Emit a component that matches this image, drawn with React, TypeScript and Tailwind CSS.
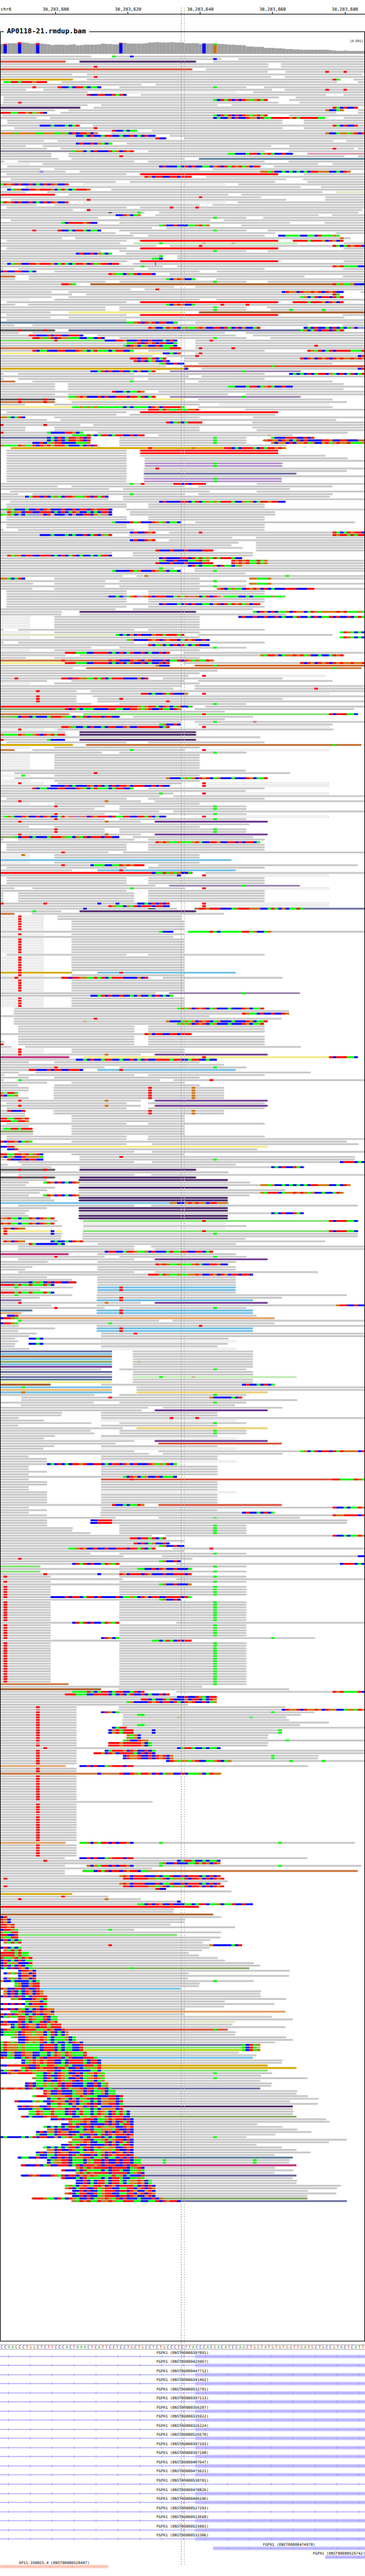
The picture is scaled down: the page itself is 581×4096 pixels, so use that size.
import React from "react";

const CELL = 1000 / 101;
const ROW = 7;
const FIRST_ROW = 154;
const READ_HEIGHT = 5;

const BAR_COLORS: Record<string, string> = {
  "": "#c8c8c8",
  t: "#d8503a",
  p: "#4b2768",
  y: "#d4a900",
  o: "#ffffff",
  n: "#d17105",
  m: "#958ea0",
  k: "#dba0b2",
  s: "#5a7f99",
  r: "#ff0000",
  l: "#dbe5c0",
  e: "#b9ffa5",
  b: "#c7743c",
  w: "#a65c27",
  h: "#f2ea87",
  z: "#565454",
  v: "#66699b",
  q: "#80df70",
  u: "#8962a8",
  j: "#ad7bd4",
  x: "#cf6020",
  a: "#86a862",
  i: "#703a93",
  c: "#6fbee5",
  f: "#bc2b76",
  d: "#8f79b5",
  g: "#dfa064",
  E: "#ebb96b",
  F: "#ebd070",
  H: "#a8d600",
};

const OUTLINED = "oeuj";

const BASE_COLORS: Record<string, string> = {
  A: "#00ff00",
  C: "#0000ff",
  G: "#d17105",
  T: "#ff0000",
  a: "#66e066",
  c: "#8c8cdc",
  g: "#cbb69c",
  t: "#dd7878",
};

// One line per alignment row. "a-b" is a read over cells a..b, with a colour
// key before it and "<" or ">" for its direction; "nACGT" are mismatched bases
// from cell n on; "D" marks a deletion, "I" an insertion; "n*" repeats the row.
const READS = `0-25> 31-101 31A 36C
0-61> 59C 66-101
t0-18> p22-54> 59-101
0-74> <78-101
0-74> <78-101 26T
t0-53> 57-101
0-74 79-101 90T 95T
0-20 24-100>
0-75 <79-101 26T
y0-20> 24-94> 92TA <98-101
1AATTATTTGTTT 17-93> 99-101
0-39> 43-101
0-28> 9T 16TCCACTTACAAC 33-68> 59A 73-101
0-7> 12-75> <79-101 90T 95T
0-24> o28-65> 70-101
0-35 24TCCTTCCTATC 39-90> 95-101
1-77> <82-101
1-74> 59ACTATCTCTGAGTAT 80-101
<1-77 5T <83-101
0-24> 28-60> 64-101
p0-22> 26-99> 92TACTCCT
0-15> 19-95> 90GCCAG 99-101
0TTTAATTGTAGTC <17-93 99-101
<1-74 59ACTATCTCTGAGTAT 80-101
0-10> <14-90 59CACCGCTCCTGGCTAATTTTTGTATTTTTAA 95-101
2*2-78> 84-101
0-22> 11CCCACCCACAT <26-101 92TACTCCT
4-78> 84-101 26T
0-38 31TCCACAA 42-101
n0-27> 4A 10AA 15AA 18A 19CTCTTGCt <31-101 90GCCAGGAGTCT
0-43> 21CCACTCCATTCCACCTCACTCC 47-101
0-46> 43TCC 51-101
0-12> 16-92> <96-101
0-31> 21CTCCTCGACA 35-101
0-7> <12-75 80-101
0-13 <17-98 99-101 92T
m0-37> 20AGGCaCTCCCTAGCTGT 41-73> <80-101
0-14> 19-81> 63AACCCATTCAGTACCTCC k85-101
0-14> 19-95> 33T 99-101
0-16> <20-51 s55-101
0-1> 5-37> 41-73> <80-101
o0-8> <12-88 92-101
2-72> 44CTCCCACTCTCCAACGTCTATGTAGCTT <76-101
0-11> 15-55> <59-101
0-18> 11c 22-97> 72GGAGCCACACACACTTGGGCCACTG
<2-35 <r39-77 84-101
0-53> 40TGCTTCCTTCTTT 57-101
3-79> <84-101
0-32 36-76> 85-101
0-19> 0ATGTCTCCTCACTCTGCCT o23-62> 66-101
0-3> 7-83> <89-101
2-25> 2CAGGCCTTGTTTGCATACATTTG <31-101
0-7> 13-89> l93-101
r0-15> 19-63> <67-101
0-72> 55T 90-101
3-79> 24T 90-101
0-19 0ATGTCTCCTCACTCTGCCT o23-62> <66-101
0-10> 15-55> <59-101
<2-35 <39-101 47T 54T
0-20> 24-100> 24T
0-40 38A D30-31 44-99>
0-39 32CCTGCAG 43-88> <92-101
0-27> 33-68> 59A <73-101
3-58> 62-101
0-27 17ACTTTTGTCC 33-80> <90-101
0-58> 44AGCCTCCCAAGTAG <67-101
0-42 46-101
0-28 9T 16TCCACTTACAAC 33-68> 59A 74-101
0-32 36-76> <93-101
0-37 41-73> 77CCAAAACCAACTAAAGA
0-17> <21-97 94G
<2-35 <r39-77 81-95 81TTTTATTTGCTGCT
0-33> e37-82> 44A 56g 64g 95-101
0-43> 47-101 55T 92TACATGTTC
<2-35 <r39-77 95-101
0-28 33-68> 59A 74-101
0-31 21CTCCTCGACA <35-101
0-45> 44A 49-101
0-45> 42AAC 49-101
0-35> <r39-77 95-101
0-33 2CAGGCCTTGTTTGCATACATTGCTAGTTCTT <37-101 I43
0-45 39A 49-101 92TGTAAAACC
0-1 5-37> 41-73> <95-101
0-10> 0CTCCTTCCAC 15-55> 60-101
0-43> 30TGAACGATCTTTC 47-101
b0-4> 8-84> <95-101
0-4> 8-54> 46ACGTGCCA <60-101
0-29> 33-68> 59A 74-101
0-21> 17TTGA w25-101 92TAGAAGCCC
0-48> 54-101
0-36> 40-101 43T
0-14> 19-95> 78CTGGCTGGTGTCTGTCC <100-101
0-20 <24-94 92TA
0-14> 19-95> 83AGCATCTTCTAT
o0-8> 15-55> <60-101
<2-35 <r39-77 <81-95 81TTTTATTTGCTGCT
0-4> <8-101 46ACGTGCCA 61T 68T
0-29> 33-68> 59A <74-101
0-29> 33-68> 59A <75-101 80A 89A
0-14 h19-51> w55-101
<2-35 <r39-77 <95-101
0-14 19-95>
<2-35 <39-101
s0-49> 35AAGTCTGTCTTCCA 54-101
0-4 9-85> <95-101
0-72 41TGCCATGTCAGAAGTGCCTTCTACTCGCCAT <84-101 84CACTCCACTCACAtCcc
z0-15> 5T 12T v19-95> 83AGCATCTTCTAT
0-5> 9-62> 68-101
0-23> 8TTCCCTCTTCCTTTC 27-65> 70-101
0-29 9TTGAGTCTGGAAACCAACTC 33-68> 59A <75-101
q0-49> 15T 29CCCTTGCCCTCCTCCCACTC 54-101 58T
0-49> 35AAGTCTGTCTTCCA 54-101
0-49> 34ACTGCAGCCTCAAAC 54-101 87T
b0-50> 45AATTT 54-101 55T 64T
0-37> 9TCAACCCTTCCCTGACATAAACATTCCA 41-73> 85-101 85TGATCATCTTTTAAAT
h0-50> 45CCACT 54-101 55T
0-42> 46-101 54T 99CT
0-46> 36TTCTTATCAT 51-101 83TCTGCTGTCTGTGGTGTG
0-47> 37TCTCAGCCTC <51-101
0-51> 44AGCCTCC <55-92
0-46 <t51-101 75A
y0-52> 51C <56-101 99CT
0-43> 25CCATCTCCTCCACGCCAT u47-83> 67A
0-1 5-37> 41-73> 80CACACTCATTCGACTCATCAT
0-52> <56-101
0-1 5-37> 41-73>
b0-4> 9-51> 36A <55-92
0-15> <19-95
0-15> <19-101 63AACCCATTCAGTACCTCC
0-15> <19-95
0-40> 31TCCACAATG <44-101
0-15> <19-63 68-101
0-43> 19AAGTGCCCTCTCCTTTCTTATCAT u47-83> 67A
z0-15> 5T 12T <h19-51 <55-92
b0-15> 5T 12T <20-96
0-7 15-55> <o61-91
h0-51> 20AAGAGAGAAAAAAACACAAAACTGCTTTTTA <55-92
0-55> 41TTTATGAAGAAGGT <68-101
<2-35 <r39-77
0-32> 36-76>
0-7> 0GGACATC 15-55> 70-101
0-13 <17-93
0-56 46TCAGCATTTT <70-101
0-22> 0T 12T <26-101
0-7> 15-55> <70-101
0-7 15-55> 71-101
0-23 0T 13ACCCCTTGCA 27-96>
0-40> 20AAAATACATTCATTCCTCTT <44-81 74g
v0-25> 13CACTCATTGTCT 33-68> 59A <75-87 75ACCCTTTCCTCT
0-25> 13CACTCATTGTCT 33-68> 59A <w73-101 73GTGGCTGCATCTCCCCTTGCCTTCCC
0-25 9CCTCAGTTCCCCAAAG 33-68> 59A <75-101 75GCGGCTCGGTAGCCGTAGTGGTAAAG
0-27 0GAAAATGAATCTGTATTTACCCACTCT 33-79>
y3-79> 41T 53G 62TTCACTTTACTATTGTG
2*<2-35 <r39-77
<2-35 <39-90
<2-35 40-96>
<2-35 40-101
2*<2-35 j40-78> 59A
<2-35 <40-101 43T
<2-35 <40-96
<2-35 <v40-82
<2-35 <40-101
2*<2-35 <j40-78 59A
0-57 36A 39T 48TTCTCTTTT 71-101
0-16 <20-51 <55-92
0-30> 34-80>
<3-58 71-101
0-5 9-51> 36A <55-92
0-30 7CATTCTCAGACTTGAAGTCTATC 34-91>
0-30 34-101
<3-79 44CTCCCCTTCATCAGAGATTTACCGAGCATTGTTCC
2*<2-35 41-73>
m0-31> 1AGACCCACCTCTGCCCTCCTCTTCTGTTTC <35-101
0-31 2TAGGCTTCCTTTCACTCATGCCACACTTC 36-76>
0-31> 0AaGACcCaccctCTgCCCcCtCCTTCGattC 36-76>
2*<2-35 41-73>
0-50> 31ACCCCTAGCCCTGAGCAAC 54-98>
2*<2-35 41-73>
0-1 5-37> 41-73>
0-43> 36CTCCTGT <47-101 55T 92TACATGTTC
0-31 11CCCACCCACACCTCATCGAT <36-101 92TGTTATATT
0-64> <71-101
0-43 36CTCCTGT <47-101
0-66 <71-101
0-64 <71-101
0-67> <71-101
0-59> 43TCCCTCCCTCCCCTTT <71-101
0-31 <37-70
0-31 2TAGGCTTCCTTTCACTCATCACCACATTC <37-70
0-67> 44CTCCCCTTCTATAGATATTTACC
0-58 44AGCCTCCCAAGTAG 64-101 64TGTGTAATAG
0-59 43TCCCTCCCTCCCCTTT <64-101 64TGTGTAATAG
0-101 52CTACAAAGCTAACAG
0-48> 44A <54-101
0-50 31ACCCCTAGCCCTGAGCAAC <54-101 59A
0-68
0-34 <38-101 40G 79A
0-7 0GGACATC 15-55> 69-101 69GGAAAG
0-29> 33-68> 59A
0-9> 15-55> <69-101 69GGAAAG
0-29 33-68> 59A
0-9 15-55> 60-101 60GTCAGAACTGTGCTCACCCTTTCCCTT
2*<2-35 41-73>
<2-78 29gCCACcaGTctGTCTTTCCaGaGttGCATCTtgAAAACCACAAAAAtAAa
2*<2-35 41-73>
<2-72 44CTCCCACTCTCCAACGTCTATGTAGCTT
<2-35 41-73>
0-32 <37-70
0-17> p22-54> 70-101 70ACTGCTCAAGCTGGCATGAGGGGTGTAAAGA
0-17 22-79>
o0-8> 15-55> 66-101 66CTCCTCCTCCTCACCATCCACTCAATCTCCTCATA
4*o0-8> 15-55>
0-1 5-37> 41-73>
o0-8> 15-55> 94-101 94ATGACAC
l0-51> 32ACACGCTCCCGTTATTTAT <55-92
o0-8> 15-55> <94-101 94ATGACAC
0-58> 35AGCCCCTGTCTGTTCATGTCCTC
0-1 5-37> 41-73>
0-58 41TCAGCACTCTACATCCC
0-25> 33-68> 59A
o0-8> 15-55>
0-47> 18TTTAAACCTTTTCACTCATCCTCACCTCT <51-101
0-18> 22-95> 72GATTGCAGGTGTAGCCACCATGT
0-7> 15-55>
b0-59> 17T 30TGTCCCTGTCGTCCCTCAATCTGAGAATG
h0-47 18TTTAAACCTTTTCACTCATCCTCACCTCT <51-101 83TCTGCTGTCTGTGGTGGT
0-47 43GCCC <x54-101 59A
0-20> <b24-100 92A
0-60>
0-55>
0-52> <o56-90 56T
0-41> 4T 17TTCTTGGAATATCATTTCCCCGCT 45-78>
0-13 <20-51 <55-92
o0-8> 15-55>
0-50> <54-101
0-48 <54-101 87T
0-21> 10T 25-101
0-52> 39TTCACCTATCCCG <o56-91 56T
0-21> 10T <26-101
0-21> 10T 27-78> 33T
0-21> 10T 27-101 46T
0-25> 33-68> 59A
r0-53> 38GAGTTACTGCAGCCA <57-101
a0-50> 18TCTACAAACCCCTTAACCTTGAGTCCTAACTG <54-98
0-62>
b0-19> q23-99> 56T 91TCTTTAAC
a0-33> 4ACTTCACCCATTTGAACGATCTTTCTTCC <37-70
0-62>
0-50 <54-101 59A 70t
0-50 44AGCCTC <55-92
0-47 17TTGACCACTCCACTTCCTGCCTTTTTTCAT <o56-91 56T
o0-12 5T 16-92>
0-18> p22-54>
0-18> 0GAAAATGAAGTCTGTATT p22-54>
0-72
0-18> 0T 13ACCCC p22-54>
<2-35 41-73>
y0-20> <b24-100 92A
o0-8> 15-55>
b0-4 9-51> 36A <o56-91 56T
0-28> 33-68> 59A
6*o0-8> 15-55>
0-68
4-80> 26T
o0-8> 6A 15-55>
4-74> 46GCCCAGAGCTGTCAGCCCACCCTGCAAT
o0-8> 15-55>
o0-12 5T 16-50> <o56-91 56T
0-47 14CCCCTCACCCTGCTCACTCTTGCTTTCCTCTCC <o56-91 56T
0-37 9TCAACCCTTCCCTGACATAAACATTCCA 41-73>
0-68
0-48 44A <o56-91 56T
0-44> 48-101
<2-35 41-73>
0-39 5T 29G <43-101
o0-8> 15-55>
0-29 15T 33-68> 59A
0-26> 33-68> 59A
0-44 48-101
0-29 15T 33-68> 59A
0-46 1AGACCTGCCTCTGCCaTgttcttCTGTTTCTAATTCCTTATCaCC <o56-91 56T
0-29 15T 33-68> 59A
0-39 5T 29G <i43-74
0-69
0-8 15-55>
2*0-29 15T 33-68> 59A
0-39 5T 29G <i43-74
a0-33 4ACTTCACCCATTTGAACGATCTTTCTTCC <37-70
0-1 5-37> 41-73>
0-72 43TGTGAAGAAAGTACCTTGCCTTCTCTTCA
3*<2-35 41-73>
0-30 17T 34-101
o0-8> 6G 15-55>
o0-8> 15-55>
c0-64
o0-8> 15-55>
0-40 17T 25CAAACCAATGTGTTT <44-99
<2-35 41-73>
0-20 c27-65> 33T
r0-53> 42CAATAGAGCCA <57-101
0-50> 49C <o56-91 56T
3*<2-35 41-73>
0-43 <u47-83 67A
0-4 9-51> 36A <o56-91 56T
0-35 41-73>
4*0-1 5-37> 41-73>
0-47 0T 12T 27C 32C 38CCACTCTCT <o56-91 56T
0-47 30TGAACGATCTTTCTTCC <o56-91 56T
0-49 23C D41-43 <v54-101 54GTTGTTTCCCAGTTTGGGCCATACGCAATA
0-17 9A p22-54>
b0-4 <9-62
2*o0-12 5T 16-50>
4*o0-12 5T <20-51
0-48 44ACCC 52-101 52AAAAAATACAAAAAATTAGCCAG
o0-12 5T <20-51
0-48
5*o0-12 5T <20-51
o0-12 5T <20-51
<2-35 41-73>
6*o0-12 5T <20-51
y0-20 5T c27-65> 33T
o0-12 5T <20-51
0-41 4T 17TTCTTGGAATATCATTTCCCCGCT 45-78>
5*o0-12 5T <20-51
0-43 <u47-83 67A
0-48 25CCATCTCCTCCACGCCACTCACA
4*o0-12 5T <20-51
4-73> 49AGAGCTGTCAGCCCACCCTGCAAT
<4-80
<4-80 67TGAACTCCTCCTG
0-58
<4-78 26T
<4-74 23g 46GCCCAGAGCTGTCAGCCCACCCTGCAAT
<4-73 49AGAGCTGTCAGCCCACCCTGCAAT
3*5-37> 41-73>
0-53 40TGCTTCCTTCTTT
2*5-37> 41-73>
0-1> 5-37> 41-73>
0T 5-37> 41-73>
0-3> 7-83>
2*o0-12 5T <20-51
0-39 5T 29G <i43-74
f0-19> h23-99> 56T 91TCTTTAAC
0-60 21CCACTCCATTCCACCTCACTCCTTTTATTCCATTCCACC
0-8 15-55>
0-62
0-29 15T 33-68> 59A
0-23 8TTCCCTCTTCCTTTC c27-65> 33T
0-5> <10-86
0-1> 5-37> 41-73>
0-8 15-55>
0-1 5-44> 5A 48-101 58T
0-13 <20-51
0-5 15-55>
2*0-8 <15-62 41T 53G
0GaTTA <15-62 41T 53G
0TCAAG <15-62 41T 53G
0-8 <15-62 41T 53G
0-39 5T 29G <i43-74
<2-35 41-73>
0-39 5T 29G <i43-74
<2-35 41-73>
0-7> 2TCCCT <15-62 41T 53G
0-7 <15-62 41T 53G
0-7 <20-51
0-8> 0TTAATTGT <20-51
0-8> 0TTTAATTG <20-51
<2-35 41-73>
0-8 <20-51
0-9> 1AATTATTT <20-51
a0-9> <20-51
0-9> <20-51
<2-35 41-73>
<2-35 <41-101
0-9 0TCTTGCAGA <20-96
<2-35 42-99>
h0-74 0CCTT
2-71> 2CCT
5-37> 42-101
0-12 0TTAATTGTAGTC <20-51
0-12 0GCAGCCTGGGGA 22-98> 33T
0-12 2TCCCTCTTCC 22-98> 59A
5-37> 42-101 94CTTTCAC
0-2> 6-65>
0-14> 22-84> 75CACTCCTAC
z0-15> 5T 12T p22-54>
0-63>
5-37> <42-101
z0-15> 5T 12T p22-54>
0-13 <p22-63
0-8 12-69> 12ATGCTCACTG
0-7> <22-97 72GGAGCCACACACACTTGGGCCACTG
0-15> <p22-63
0-13 <22-79
0-11 <22-95 72GATTTCAGGTGTGAGCCACCATG
0-8 <12-69 12ATGCTCACTG
0-14 <p22-63
0-15 <p22-63
c0-63> 47GGCCGTGTGGCTTGGG
5-37> <42-99
0-13 <p22-63
0-8 <p22-63
0-7 <22-84 75CACTCCTAC
0-8 <p22-63
0-15> 0tGTAACAATGCTGAT <p22-63
0-16 q23-99> 56T 91TCTTTAAC
0-15 0TGTAACAATGCTGAT o23-62>
0-17> 23-68>
0-7> 1TGCTGG o23-62>
h0-17> 1T 14C q23-99> 56T 91TCTTTAAC
0-17> 1T 14C <23-99 59A
0-17 <23-99
0-17 <23-68
0-7 1TGCTGG <14-90 14CACCACTGT
0-18 8TACCCCCCAC 27-65>
5-37> <42-101
5-37> <43-101
0-59 29CTTCCATTGAAGCTCCCATAATTCCTTCAT
f0-19 27-65>
0-29 15T 33-68> 59A
5-37> <i43-74
0-13> 27-65>
0-63> 43TGTGAAGAAAGTACCTTGCC
0-9 27-65>
0-7 27-65>
5-37> <43-88
0-70 41TTTATGAAGAAGGTGCCTGCTGCTTCTTC
0-13 27-65>
0-20 27-65>
v0-21> 8CAGACTCTTCCTT 27-65>
0-15> 0TTTTATAATAAATAC 27-65>
0-20> 4A c27-65> 33T
0-11> c27-65> 33T
0-15 0TTTTATAATAAATAC 27-65>
0-20 4A <27-96
0-11 <27-78 33T
d0-6 <c27-70 33T
0-39 5T 29G <i43-74
0-14> <27-101 93GTTCCTCC
0-29 15T 33-68> 59A
s0-9 <c27-70 33T
g0-6 <c27-70 33T
<2-71 2CCT
g0-76 0CTTGA
<5-44 5A <48-101
0-76 0CTTGA 30A
0-5> <27-101 55T
0-15> <c27-70 33T
0-5 <c27-70 33T
0-10> 28-101 37T
0-8> 28-101
0-4> 8-63> 8CCAC
0-5 o28-65>
0-4> <8-63 8CCAC
0-4 28-60>
0-8> o28-65>
v0-31 <37-70
c0-31 <37-70
w0-31 <37-70
c0-31 <37-70
a0-31 <37-70 38g
c0-31 <37-70
i0-31 <37-70
0-28 33-68> 59A
v0-31 <37-70
0-31 <37-70
v0-31 <e37-82 44A 53g
s0-31 <37-70
h0-31 <37-70
w0-14 28-76> 67CTCCACTCA
c0-31 6A <38-101
E0-31 <38-101
c0-31 6G <F38-74
0-26> 33-68> 59A
6-67> 30T 58GCCCCCACT
6-82>
0-26 33-68> 59A
<6-65
0-41 45-78>
0-39> <i43-74
0-17> 28-60>
0-17 28-60>
0-5> 28-101 47T 54T
0-12> o28-65>
0-25> 33-68> 59A
0-5 28-60>
0-34 <F38-74
0-25 33-68> 59A
0-26> 33-68> 59A
0-15> 28-60>
0-12> o28-65>
0-37> <i43-74
0-32 <t44-78
0-15 28-60>
0-12 o28-65>
0-37> <44-101 83AGCATCTTCTATGGGGCT
0-41> 45-78>
0-8 28-60>
0-13 28-60>
0-13 o28-65>
0-49 13CACTCACTTGTCCTTCACTTCTGCTCCCTGAGATCA
2*0-8 28-60>
0-13 28-60>
0-8 28-60>
0-49 34ACTGCAGCCTCAAAC
0-8 t28-101 36T 92TTAAAATGA
2*0-13 28-60>
2*0-8 28-60>
0-13 o28-65>
4*0-13 28-60>
0-40 31TCCACAATG <t44-78
0-8 28-101 92TCCACAATG
0-13 28-60>
0-8 <28-76 67CTCCACTCA
0-13 <28-101 92TGGTTTTCT
0-32 <44-83 59a
0-13 25-96> 25CCTTTT
0-13 <25-96 25CCTTTT
0-13 33-68> 59A
0-20> 33-68> 59A
0-20 33-68> 59A
0-25 33-68> 59A
0-42 <46-101 92TCCACAATG
0-46 36TTCTTATCAT
0-51
0-47 37TCTCAGCCTC
0-51 44AGCCTCC
0-43 19AAGTGCCTCCTCCTTTCTTATCAT <48-101 58T
0-51
0-25 33-68> 59A
0-34> <45-101 99CC
0-53> 5T
0-50> 44AGCCTC
0-33> 20CTATCTCCATGAT <49-101 94CTTTCAC
q0-11> 33-68> 59A
0-53> 38AACCTCTGCCTCCCA
q0-11> 33-68> 59A
0-53 12T 27C 33TGCTTTCTGCCCTCCTTTCT
0-14 1T 33-68> 59A
0-34 <49-101
0-14 1T 33-68> 59A
0-53 44AGCCTCCCG
4*0-14 1T 33-68> 59A
0-53 1T 14CCCCTCTTCATTCTCCCCTCAAGACTGCTTCCTTTTCTA
0-50 44AGCCTC
8*0-14 1T 33-68> 59A
0-33 20CTATCTCCATGAT <49-101
5*0-14 1T 33-68> 59A
0-14 1T 28-87> 28CTGCA 75A
0-53 42AACATACTCTT
16*0-14 1T 33-68> 59A
b0-19 33-68> 59A
0-56
w0-28 <33-80
0-40 20AAAATACATTCATTCCATCT <49-101 92TGTAAAATC
0-47 18TTTAAACCTTTTCACTCATCCTCACCTCT
0-60 49CCTCCTGACTT
0-60 39TTCACCTATCCCGCTTCACTG
0-60 35AGCCCCTGTCTTCTACTGTCCTCAG
0-52
0-21> 10T <33-79
0-21> 10t <33-101 78CTGGTCTGGTGCTGGCCAGGATG
0-21> 10T <28-87 28CTGCA 75A
0-21> 10T 34-83> 38AA
0-21> 10T 34-79> 49g 69a
0-21> 10T <34-80
0-21> 10T <34-91
0-21> 10T <34-83 38AA
0-21> 10T 31-101 31CATT
0-21> 10T 30-78> 30CGTATTT 42C 77A
0-21> 10T <30-78 30CGTATTT 42C 77A
0-21> 10T 35-74> 35GAGC
0-21> 10T <35-74 35GAGC
0-21> 10T 34-101 34AGCCTGG 79A
0-21> 10t 30-74> 30TTTGTTTTTGCA
0-21> 10T <30-74 30TTTGTTTTTGCA
0-61> 12T 49CATTACCACAAC
0-21> 10T 29-101 29CATTTGCTGCCTCA
0-21> 10T <26-101 26TTGCTGCTTTTACTCTC
0-21> 10T 34-88> 34CTGGTCCTCTGTCG 75A
0-21> 10T <34-88 34CTGGTCCTCTGTCG 75A
0-21> 10T 46-101 46CTGAGGAGTCCAAGTCAG 80A 89A
0-21> 10T
g0-18> 22-85> 22CCTCTCCAGTTTCTT
2*0-21> 10T
b0-61> 27C 33TCCTGATTGCTCAGGCCTCAAAGCATGG
10*0-21> 10T
0-42>
4*0-21> 10T
0-21> 10t
10*0-21> 10T
g0-18> 22-98> 22AAGCGATTCTCTTGC 44A 77A
5*0-21> 10T
0-18 <22-85 22CCTCTCCAGTTTCTT
0-61 12T 49CATTACCACAAC
0-61 44AGCCTCCCAATATGCTG
0-18 <24-100 24GCGATTCTCTTGC 44A 77A
0-42
0-18 <b23-99 23AAACTATCTTCTGTTCAA
0-18
0-61> 33GTGCTTTCCCTCAATCCTCTTTCACTCT
0-62> 1T 34TTCTTTTGGAGTCAGGATCTTGCTCTGT
0-63
0-61 33GTGCTTTCCCTCAATCCTCTTTCACTCT
0-62 1T 34TTCTTTTGGAGTCAGGATCTTGCTCTGT
0-46 43TCC
0-64
y0-20
0-30 17T
0-39 5T 29G
0-50 49C
0-70 38AACTCTGCCTCCCAACATTCAAGCAATCCTCC
r0-55
0-48>
0-48
w0-59
0-61> 0CT
0-51> 0TGC
0-51 0TGC
0-47> 0TTGT
0-65 0TTGT
0-37> 0CTTGA 30A
0-61> 0GAATT
q0-49 0TTCCT
0-61 0GAATT
0-58> 0CTCACA
1-56> 1GATAT
<6-67 30T 58GCCCCCACT
0-58 0CTCACA
<1-56 1GATAT
0-52> 0TTTTATAA
0-55 0TTTTATAA
0-60> 0TAAGTATGT
0-62> 0CTCACTCAA
0-70> 0CTAGGCCCT
0-72 0CTCACTCAA
a0-69 0CACTCTGCA 36A
5-80> 5CTTGC
1-52> 1CGAGCGGCT
<5-80 5CTTGC
<1-52 1CGAGCGGCT
0-70> 0GCCACCCCACA 59A
4-55> 4AGCCGTT
<4-55 4AGCCGTT
c0-50 0TGCCTTCTCCT
1-72> 1GCTCACTGCTG
<1-72 1GCTCACTGCTG
0-72> 0CTCTCTCACTTTT
3-79> 3GATCCCTGAT
7-62> 7AGGGCA
0-76 0CTCTCTCACTTTT
<7-62 7AGGGCA
0-51> 0CTCTCGACACTCTGG
<g3-79 3AAGTCCTGTGGC
0-51 0TCTCTGACACTCTGG
0-75> 0CAGAATTATGAATCAA
<5-81 5TTATGAATCAA
l0-65 0CTCCCTCACAATCTGT
0-64> 0TTGCATCTGGCTTATTT
<3-79 3CATCTGGCTTATTT
t0-63 0CTGAAATTTTAAGTGCCT 59A
0-65> 0CAAAGCTGGAGGCATCACG
0-65 0CAAAGCTGGAGGCATCACG
3-79> 3AGCCTGGGTGACAAAGCA
<5-81 5CCTGGGTGACAAAGCA
0-76> 0ATGAGCCGAGATCACACCACTGC
v0-72 0ATGGGAGAAAACTTTCACAACCT 67ACTAG
q0-72 0ATGGGAGAAAACTTTCACAACCT 67ACTAg
H0-72 0ATGGGAGAAAACTTTCACAACCT 67ACTAG
0-66> 0CCAGCCTGGCCAACATGATGAAAT
0-71 0CCAGCCTGGCCAACATGATGAAAT
c0-70 0TGAACCATGCATCTTTTCATCCCTTTA
6-78> 6CAGTGTGTTCCACTTTTACTTC
<6-78 6CAGTGTGTTCCACTTTTACTTC
y0-74 0CCTTTTTTCCTAATTGAATACCCTTTAT
<y6-82 6ATCCTGTTTCTTACCTCAGAGT
q0-74 0CAGTCTATGAGGGTTCCAATCCCCCAAC
0-75> 0CCTGGTTTTGAACTACTGACCTCAGGTGA 59A
10-72> 10AACTCCTGAGTCTAAGCAG
<9-85 9GAACTACTGACCTCAGGTGA 59A
<10-72 10AACTCCTGAGTCTAAGCAG
7-75> 7CTCAAGAGATCTTCCCACCTCAG
<7-75 7CTCAAGAGATCTTCCCACCTCAG
v0-72 0TGTTGTGCTATCAAATACTAGGTCTTATTCA
12-82> 12TGCCTCCCAGGCTCAAGCAA
<12-82 12TGCCTCCCAGGCTCAAGCAA
9-85> 9ATTTGAGGGTTAATGAAACCCTTCT
13-88> 13CAATGACGCAGTCTCGGTTCA
4-80> 4TCCCCAGACCTGGGCTTCGAACACGGGGCT
<13-88 13CAATGACGCAGTCTCGGTTCA
<p5-81 5CTCTGGCCTAAGAAACGGCTCTaCCCTCT
<5-81 5CCCCAGACCTGGGCTTCGAACACGGGGCT
8-81> 8AATGAATAAACTCATAACATGACTATAC
<8-81 8AATGAATAAACTCATAACATGACTATAC
<a6-82 6TCACCCTGTTAAAACCAGATTGATCTTTCC
14-90> 14CCTCTTGGGTTTCAAGTGTTCTC
19-91> 19GAAGTGCCAATCGCTATC
17-71> 17CCTATCCTCCCCTCTCATTC
12-78> 12ACACACATTCATTCGTGAGGCCTGT
13-82> 13GGCTCCTGAACTCAAGGGATCCTC
10-86> 10CTCGGCTGGCCCAGGTGAGCTCTGCTC
10-76> 10ACCAACTTTCTATCCTCATCTGTTTCT
0-68> 0CACCCCACATCTTCCGCAGTAACACGTTCACACCCTt 59A
<20-96 20GGGTTCAAGTAGTTCTC
<19-91 19GAAGTGCCAATCGCTATC
<17-71 17CCTATCCTCCCCTCTCATTC
<12-78 12ACACACATTCATTCGTGAGGCCTGT
<13-82 13GGCTCCTGAACTCAAGGGATCCTC
<10-86 10CTCGGCTGGCCCAGGTGAGCTCTGCTC
<10-76 10ACCAACTTTCTATCCTCATCTGTTTCT
<s5-81 5CAACCTCCACCTCTCAGGTTCAAGCAACTCTCG
13-80> 13CAGGTTCAAACGATTCTCCTCTTCAA 45A 70A
<13-80 13CAGGTTCAAACGATTCTCCTCTTCAA 45A 70A
<f6-82 6TCCCTCAGCCTTTCATCTTTGTCTTTCCTCTTG
21-76> 21GTATGTTTTCTTTTCAGTC
17-81> 17TCCCACTAAAACACTTACCAAGA
<21-76 21GTATGTTTTCTTTTCAGTC
<v6-82 6CCTGTCCCTGATCTTCGTGTGAAAATAGCACCCT
<17-81 17TCCCACTAAAACACTTACCAAGA
21-82> 21CCTCACTTACTTACAGGTGCA
<21-82 21CCTCACTTACTTACAGGTGCA
18-94> 18AGACGTGATTGCTGCTTTTACTCTC
18-93> 18GTCATTCCTAGTTCCAATTCGTCTG
20-85> 20CCTCTCCAGTTTCTTCTGCCGTC
<18-93 18GTCATTCCTAGTTCCAATTCGTCTG
<20-85 20CCTCTCCAGTTTCTTCTGCCGTC
<a9-85 9TTTGAACTACTGACCTCAGGTGATCTCCCACCCTCG
<v20-96 20GATGTAATGGTGAATTTAACCAATCTGTTC`;

type Layers = {
  bars: Record<string, string>;
  bases: Record<string, string>;
  deletions: string;
  insertions: string;
};

function layoutReads(source: string): Layers {
  const layers: Layers = { bars: {}, bases: {}, deletions: "", insertions: "" };
  const px = (cell: number) => Math.round(cell * CELL);
  let row = 0;
  for (const line of source.split("\n")) {
    const repeat = /^(\d+)\*(.*)$/.exec(line);
    const count = repeat ? Number(repeat[1]) : 1;
    const tokens = (repeat ? repeat[2] : line).split(" ");
    for (let n = 0; n < count; n++, row++) {
      const y = FIRST_ROW + row * ROW;
      for (const token of tokens) {
        const bar = /^(<?)([A-Za-z]?)(\d+)-(\d+)(>?)$/.exec(token);
        if (bar) {
          const key = bar[2];
          const inset = OUTLINED.includes(key) && key !== "" ? 0.5 : 0;
          const x1 = px(Number(bar[3])) + inset;
          const x2 = px(Number(bar[4])) - inset;
          if (key === "D") {
            layers.deletions += `M${x1} ${y + 2}H${x2}V${y + 3.5}H${x1}z`;
            continue;
          }
          const top = y + inset;
          const bottom = y + READ_HEIGHT - inset;
          const middle = y + READ_HEIGHT / 2;
          const right = bar[5] ? `L${x2 + 4} ${middle}` : "";
          const left = bar[1] ? `L${x1 - 4} ${middle}` : "";
          layers.bars[key] =
            (layers.bars[key] ?? "") +
            `M${x1} ${top}H${x2}${right}L${x2} ${bottom}H${x1}${left}z`;
          continue;
        }
        if (token.startsWith("I")) {
          const x = px(Number(token.slice(1)));
          layers.insertions += `M${x - 2} ${y - 1}h4v1h-1v5h1v1h-4v-1h1v-5h-1z`;
          continue;
        }
        const run = /^(\d+)([ACGTacgt]+)$/.exec(token);
        if (run) {
          [...run[2]].forEach((base, i) => {
            const cell = Number(run[1]) + i;
            layers.bases[base] =
              (layers.bases[base] ?? "") +
              `M${px(cell)} ${y}H${px(cell + 1)}V${y + READ_HEIGHT}H${px(cell)}z`;
          });
        }
      }
    }
  }
  return layers;
}

const LAYERS = layoutReads(READS);

const COVERAGE = [
  26, 26, 28, 28, 28, 30, 30, 29, 27, 27, 28, 27, 26, 25, 23, 24, 24, 24, 23,
  24, 25, 22, 23, 24, 24, 24, 24, 25, 27, 26, 26, 25, 25, 29, 29, 27, 27, 27,
  27, 27, 28, 30, 30, 31, 30, 30, 30, 31, 30, 30, 30, 28, 28, 28, 28, 26, 27,
  27, 27, 27, 26, 26, 25, 24, 24, 23, 23, 22, 19, 19, 18, 18, 18, 15, 15, 15,
  14, 14, 13, 12, 12, 11, 11, 10, 10, 10, 10, 10, 10, 10, 10, 9, 8, 7, 7, 8, 7,
  7, 7, 7, 7,
];

const VARIANTS = [
  { cell: 1, top: "#ff0000", topHeight: 3, rest: "#0000ff" },
  { cell: 5, top: "#ff0000", topHeight: 4, rest: "#0000ff" },
  { cell: 10, top: "#ff0000", topHeight: 4, rest: "#0000ff" },
  { cell: 33, top: "#ff0000", topHeight: 2, rest: "#0000ff" },
  { cell: 56, top: "#0000ff", topHeight: 1, rest: "#0000ff" },
  { cell: 59, top: "#00ff00", topHeight: 5, rest: "#d17105" },
];

function AlignmentChart() {
  return (
    <svg
      viewBox="2 100 996 6304"
      className="block w-full"
      role="img"
      aria-label="Coverage and aligned reads"
    >
      {COVERAGE.map((height, cell) => (
        <g key={cell}>
          <rect x={cell * CELL} y={148 - height} width={CELL + 0.2} height={height} fill="#b0b0b0" />
          <rect x={cell * CELL + 1} y={149 - height} width={CELL - 1} height={height - 1} fill="#a2a2a2" />
        </g>
      ))}
      {VARIANTS.map((v) => (
        <g key={v.cell}>
          <rect x={v.cell * CELL} y={148 - COVERAGE[v.cell]} width={9} height={COVERAGE[v.cell]} fill={v.rest} />
          <rect x={v.cell * CELL} y={148 - COVERAGE[v.cell]} width={9} height={v.topHeight} fill={v.top} />
        </g>
      ))}
      <rect x="0" y="148" width="1000" height="1" fill="#777777" />
      {Object.entries(LAYERS.bars).map(([key, d]) => (
        <path
          key={key || "plain"}
          d={d}
          fill={BAR_COLORS[key]}
          stroke={key !== "" && OUTLINED.includes(key) ? "#c4c4c4" : "none"}
        />
      ))}
      {Object.entries(LAYERS.bases).map(([base, d]) => (
        <path key={base} d={d} fill={BASE_COLORS[base]} />
      ))}
      <path d={LAYERS.deletions} fill="#000000" />
      <path d={LAYERS.insertions} fill="#7a18e0" />
    </svg>
  );
}

const POSITIONS = ["38,283,600", "38,283,620", "38,283,640", "38,283,660", "38,283,680"];

function Ruler() {
  return (
    <header className="flex h-[23px] items-end overflow-hidden border-b border-black text-[7px] leading-[8px]">
      <div className="w-[5.4%] shrink-0 pb-[3px] pl-px">chr8</div>
      {POSITIONS.map((position) => (
        <div key={position} className="flex w-[19.8%] shrink-0 flex-col items-center">
          <span>{position}</span>
          <span className="h-[3px] w-px bg-black" />
        </div>
      ))}
    </header>
  );
}

const SEQUENCE =
  "CCAAGCCTGGCTCTTCCCACTAAACTCATTCCTCCTGCTGCCTCTGCCCTCTTACCCACGACATCCAGCTGGTATGTGTGGTTGATGCTGCCGTACTCATT";

const LETTER_CLASSES: Record<string, string> = {
  A: "text-[#00a000]",
  C: "text-[#1414a0]",
  G: "text-[#b86a10]",
  T: "text-[#b41414]",
};

function SequenceTrack() {
  return (
    <div className="mt-[5px] flex h-[8px] items-center border-y border-[#a8a8a8] text-[6px] leading-[6px]">
      {[...SEQUENCE].map((base, i) => (
        <span key={i} className={`flex-1 basis-0 text-center ${LETTER_CLASSES[base]}`}>
          {base}
        </span>
      ))}
    </div>
  );
}

type Gene = {
  name: string;
  start: number;
  end: number;
  exon: number | null;
  forward?: boolean;
  label: "center" | "end";
};

const FULL_IDS = [
  "397091", "425967", "447712", "341462", "532791", "397113", "356207",
  "335922", "326324", "526570", "397103", "397108", "487647", "475621",
  "530701", "470826", "496296", "527203", "533668", "525001", "532386",
];

const INTRON_ONLY = ["530701", "527203"];

const GENES: Gene[] = [
  ...FULL_IDS.map(
    (id): Gene => ({
      name: `FGFR1 (ENST00000${id})`,
      start: 0,
      end: 1000,
      exon: INTRON_ONLY.includes(id) ? null : 535,
      label: "center",
    }),
  ),
  { name: "FGFR1 (ENST00000474970)", start: 584, end: 1000, exon: 584, label: "center" },
  { name: "FGFR1 (ENST00000526742)", start: 891, end: 1000, exon: 891, label: "end" },
  { name: "RP11-350N15.4 (ENST00000528407)", start: 0, end: 297, exon: 0, forward: true, label: "center" },
];

const ARROWS = Array.from({ length: 17 }, (_, i) => i * 60);

function GeneRow({ gene }: { gene: Gene }) {
  const line = gene.forward ? "#ffab9c" : "#9f9bff";
  const exon = gene.forward ? "#ffd9cb" : "#d1cbff";
  return (
    <div className="min-h-0">
      <div
        className={
          gene.label === "center"
            ? "flex h-[8px] justify-center whitespace-nowrap text-[6px] leading-[10px]"
            : "flex h-[8px] justify-end whitespace-nowrap text-[6px] leading-[10px]"
        }
        style={
          gene.label === "center"
            ? { marginLeft: `${gene.start / 10}%`, marginRight: `${(1000 - gene.end) / 10}%` }
            : undefined
        }
      >
        <span>{gene.name}</span>
      </div>
      <svg viewBox="0 0 1000 10" preserveAspectRatio="none" className="block h-[6px] w-full" aria-hidden="true">
        {gene.exon !== null && (
          <rect x={gene.exon} y="0" width={gene.end - gene.exon} height="10" fill={exon} />
        )}
        <rect x={gene.start} y="4" width={gene.end - gene.start} height="2" fill={line} />
        {ARROWS.map((offset) => {
          const x = offset + (gene.forward ? 20 : 21);
          if (x < gene.start + 4 || x > gene.end - 4) return null;
          return gene.forward ? (
            <path key={offset} d={`M${x - 3} 1L${x} 5L${x - 3} 9V1z`} fill={line} />
          ) : (
            <path key={offset} d={`M${x + 3} 1L${x} 5L${x + 3} 9V1z`} fill={line} />
          );
        })}
      </svg>
    </div>
  );
}

export default function App() {
  return (
    <main className="relative w-full overflow-hidden bg-white pb-[10px] font-['DejaVu_Sans_Mono',monospace] text-black">
      <Ruler />
      <fieldset className="mt-[20px] min-w-0 border border-black">
        <legend className="ml-[5px] h-[14px] px-[5px] text-[11px] leading-[14px] font-bold">
          AP0118-21.rmdup.bam
        </legend>
        <div className="relative">
          <AlignmentChart />
          <span className="absolute top-[5px] right-[2px] text-[5px] leading-[6px]">[0-891]</span>
        </div>
      </fieldset>
      <SequenceTrack />
      <section className="grid aspect-[1000/600] w-full auto-rows-fr" aria-label="Genes">
        {GENES.map((gene) => (
          <GeneRow key={gene.name} gene={gene} />
        ))}
      </section>
      <div className="pointer-events-none absolute top-[12px] bottom-[14px] left-[49.5%] w-px bg-[repeating-linear-gradient(to_bottom,#999999_0,#999999_2px,transparent_2px,transparent_4px)]" />
      <div className="pointer-events-none absolute top-[12px] bottom-[14px] left-[50.5%] w-px bg-[repeating-linear-gradient(to_bottom,#b5b5b5_0,#b5b5b5_2px,transparent_2px,transparent_4px)]" />
    </main>
  );
}
